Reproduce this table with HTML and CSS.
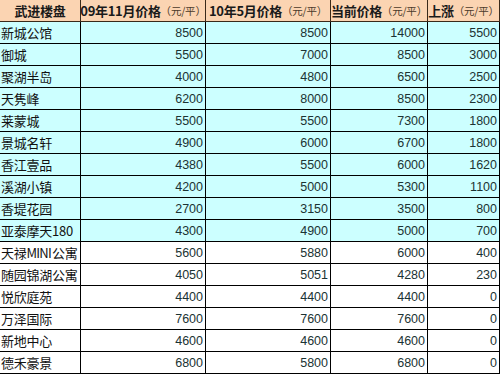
FILE: index.html
```html
<!DOCTYPE html>
<html lang="zh">
<head>
<meta charset="utf-8">
<link rel="stylesheet" href="styles.css">
</head>
<body>
<div class="sheet">
  <div class="cell head c1">武进楼盘</div>
  <div class="cell head">09年11月价格<span class="unit">（元/平）</span></div>
  <div class="cell head">10年5月价格<span class="unit">（元/平）</span></div>
  <div class="cell head">当前价格<span class="unit">（元/平）</span></div>
  <div class="cell head">上涨<span class="unit">（元/平）</span></div>

  <div class="cell name hl">新城公馆</div><div class="cell num hl">8500</div><div class="cell num hl">8500</div><div class="cell num hl">14000</div><div class="cell num hl">5500</div>
  <div class="cell name hl">御城</div><div class="cell num hl">5500</div><div class="cell num hl">7000</div><div class="cell num hl">8500</div><div class="cell num hl">3000</div>
  <div class="cell name hl">聚湖半岛</div><div class="cell num hl">4000</div><div class="cell num hl">4800</div><div class="cell num hl">6500</div><div class="cell num hl">2500</div>
  <div class="cell name hl">天隽峰</div><div class="cell num hl">6200</div><div class="cell num hl">8000</div><div class="cell num hl">8500</div><div class="cell num hl">2300</div>
  <div class="cell name hl">莱蒙城</div><div class="cell num hl">5500</div><div class="cell num hl">5500</div><div class="cell num hl">7300</div><div class="cell num hl">1800</div>
  <div class="cell name hl">景城名轩</div><div class="cell num hl">4900</div><div class="cell num hl">6000</div><div class="cell num hl">6700</div><div class="cell num hl">1800</div>
  <div class="cell name hl">香江壹品</div><div class="cell num hl">4380</div><div class="cell num hl">5500</div><div class="cell num hl">6000</div><div class="cell num hl">1620</div>
  <div class="cell name hl">溪湖小镇</div><div class="cell num hl">4200</div><div class="cell num hl">5000</div><div class="cell num hl">5300</div><div class="cell num hl">1100</div>
  <div class="cell name hl">香堤花园</div><div class="cell num hl">2700</div><div class="cell num hl">3150</div><div class="cell num hl">3500</div><div class="cell num hl">800</div>
  <div class="cell name hl">亚泰摩天180</div><div class="cell num hl">4300</div><div class="cell num hl">4900</div><div class="cell num hl">5000</div><div class="cell num hl">700</div>
  <div class="cell name">天禄<span class="latin">MINI</span>公寓</div><div class="cell num">5600</div><div class="cell num">5880</div><div class="cell num">6000</div><div class="cell num">400</div>
  <div class="cell name">随园锦湖公寓</div><div class="cell num">4050</div><div class="cell num">5051</div><div class="cell num">4280</div><div class="cell num">230</div>
  <div class="cell name">悦欣庭苑</div><div class="cell num">4400</div><div class="cell num">4400</div><div class="cell num">4400</div><div class="cell num">0</div>
  <div class="cell name">万泽国际</div><div class="cell num">7600</div><div class="cell num">7600</div><div class="cell num">7600</div><div class="cell num">0</div>
  <div class="cell name">新地中心</div><div class="cell num">4600</div><div class="cell num">4600</div><div class="cell num">4600</div><div class="cell num">0</div>
  <div class="cell name">德禾豪景</div><div class="cell num">6800</div><div class="cell num">5800</div><div class="cell num">6800</div><div class="cell num">0</div>
</div>
</body>
</html>
```

FILE: styles.css
```css
html, body {
  margin: 0;
  padding: 0;
  background: #ffffff;
}

.sheet {
  display: grid;
  grid-template-columns: 81px 125px 125px 97px 72px;
  grid-template-rows: repeat(17, 22px);
  width: 500px;
}

.cell {
  box-sizing: border-box;
  border-right: 1px solid #000;
  border-bottom: 1px solid #000;
  display: flex;
  align-items: flex-end;
  overflow: hidden;
  white-space: nowrap;
  background: #ffffff;
}

.head {
  background: #fbd4b2;
  font-family: "Noto Sans CJK SC", sans-serif;
  font-weight: 700;
  font-size: 13px;
  color: #1a1a1a;
  align-items: center;
  justify-content: center;
  letter-spacing: -0.3px;
  border-right-color: #3a2a1a;
  border-bottom-color: #3a2a1a;
}

.head .unit {
  font-size: 10.5px;
  font-weight: 400;
  color: #4a3a2a;
  letter-spacing: -0.2px;
}

.hl {
  background: #ccffff;
}

.name {
  font-family: "Noto Sans CJK SC", sans-serif;
  font-size: 13px;
  color: #111;
  padding: 0 0 1px 1px;
  line-height: 18px;
  letter-spacing: -0.25px;
}

.name .latin {
  letter-spacing: -0.8px;
  margin-right: 1px;
}

.num {
  font-family: "Liberation Sans", Arial, sans-serif;
  font-size: 12.5px;
  color: #1b3333;
  justify-content: flex-end;
  padding: 0 2px 2px 0;
  line-height: 15px;
}
```
